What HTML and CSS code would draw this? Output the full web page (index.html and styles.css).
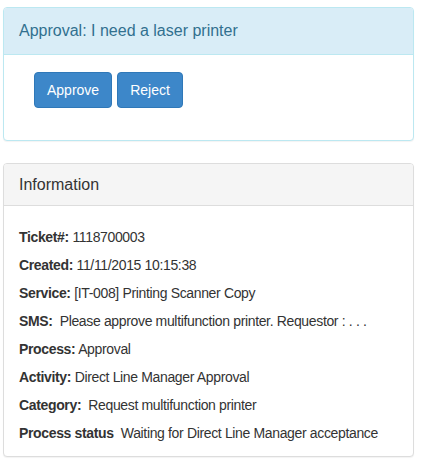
FILE: index.html
```html
<!DOCTYPE html>
<html lang="en">

<head>
    <meta charset="UTF-8">
    <meta name="viewport" content="width=device-width, initial-scale=1.0">
    <title>Approval</title>
    <link rel="stylesheet" href="styles.css">
</head>

<body>
    <div class="panel panel-info">
        <div class="panel-heading">Approval: I need a laser printer</div>
        <div class="panel-body actions">
            <button type="button" class="btn">Approve</button>
            <button type="button" class="btn">Reject</button>
        </div>
    </div>

    <div class="panel panel-default">
        <div class="panel-heading">Information</div>
        <div class="panel-body details">
            <p><b>Ticket#:</b> 1118700003</p>
            <p><b>Created:</b> 11/11/2015 10:15:38</p>
            <p><b>Service:</b> [IT-008] Printing Scanner Copy</p>
            <p><b>SMS:</b>&nbsp; Please approve multifunction printer. Requestor : . . .</p>
            <p><b>Process:</b> Approval</p>
            <p><b>Activity:</b> Direct Line Manager Approval</p>
            <p><b>Category:</b>&nbsp; Request multifunction printer</p>
            <p><b>Process status</b>&nbsp; Waiting for Direct Line Manager acceptance</p>
        </div>
    </div>
</body>

</html>
```

FILE: styles.css
```css
body {
    font-family: 'Liberation Sans', Arial, sans-serif;
    background: #fff;
    margin: 0;
    padding: 7px 7px 0 3px;
    color: #333;
}

.panel {
    border: 1px solid #ddd;
    border-radius: 4px;
    background: #fff;
    box-shadow: 0 1px 1px rgba(0, 0, 0, 0.05);
    margin-bottom: 22px;
}

.panel-heading {
    padding: 0 15px;
    font-size: 16px;
    border-bottom: 1px solid #ddd;
    border-radius: 3px 3px 0 0;
}

.panel-info {
    border-color: #bce8f1;
}

.panel-info .panel-heading {
    background: #d9edf7;
    border-color: #bce8f1;
    color: #31708f;
    height: 46px;
    line-height: 46px;
}

.panel-default .panel-heading {
    background: #f5f5f5;
    color: #333;
    height: 41px;
    line-height: 41px;
}

.actions {
    display: flex;
    gap: 5px;
    padding: 17px 30px 32px;
}

.btn {
    font-family: inherit;
    font-size: 14px;
    color: #fff;
    background: #3d87c9;
    border: 1px solid #2f78b8;
    border-radius: 4px;
    height: 36px;
    padding: 0 12px;
    cursor: pointer;
}

.details {
    padding: 17px 15px 9px;
    font-size: 14px;
    letter-spacing: -0.35px;
}

.details p {
    margin: 0;
    line-height: 28px;
    white-space: nowrap;
}
```
